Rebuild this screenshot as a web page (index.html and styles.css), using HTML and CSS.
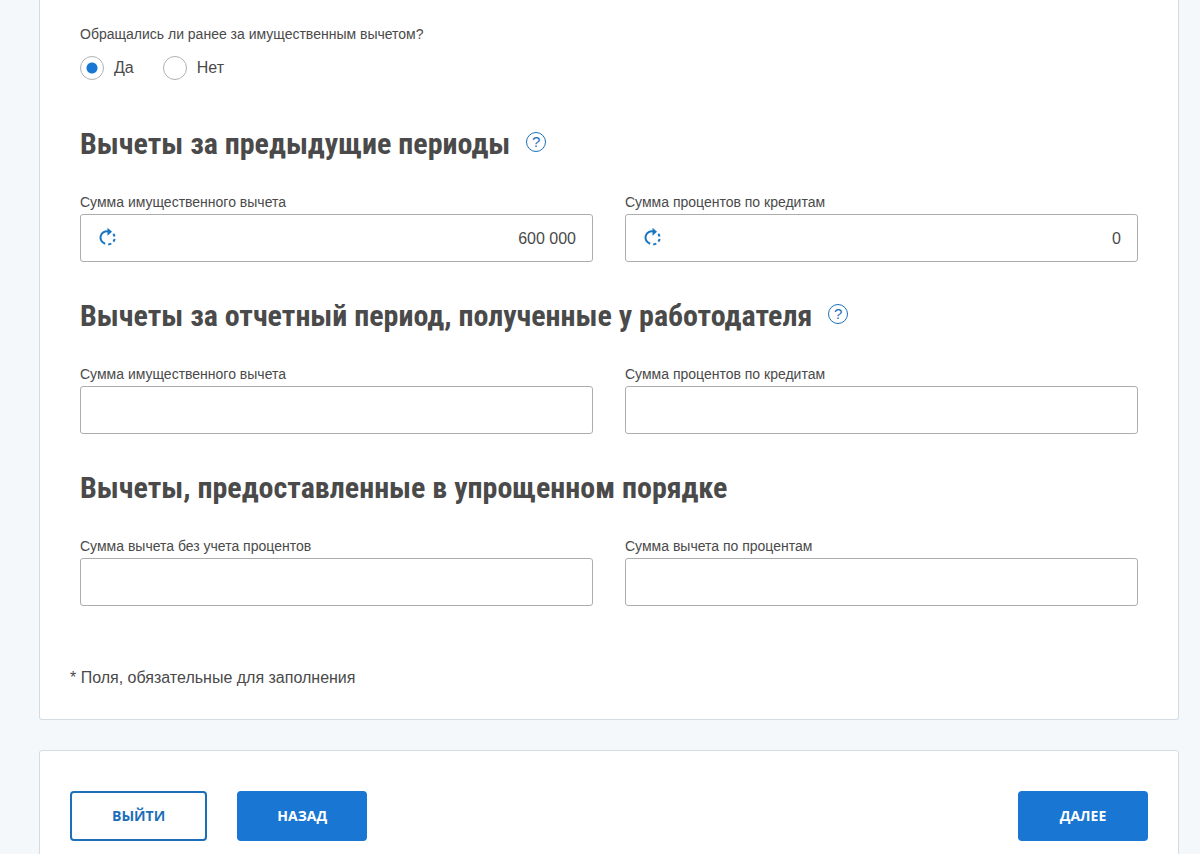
FILE: index.html
```html
<!DOCTYPE html>
<html lang="ru">
<head>
<meta charset="utf-8">
<meta name="viewport" content="width=device-width, initial-scale=1">
<title>Имущественный вычет</title>
<link rel="stylesheet" href="styles.css">
</head>
<body>
<svg class="sprite" aria-hidden="true">
  <symbol id="refresh" viewBox="0 0 18 20">
    <path d="M9.500 4.600A6.200 6.200 0 0 0 6.200 16.800" fill="none" stroke="currentColor" stroke-width="2"/>
    <path d="M8.500 .8 13 4.800 8.500 8.800Z" fill="currentColor"/>
    <path d="M14.300 6.900A6.600 6.600 0 0 1 15.500 9.400M15.600 11.800A6.600 6.600 0 0 1 14.400 14.600M12.300 16.500A6.600 6.600 0 0 1 9.200 17.500" fill="none" stroke="currentColor" stroke-width="2"/>
  </symbol>
</svg>
<main class="page">
  <form class="form" id="deduction">
    <section class="card card-form">
      <div class="content">
        <fieldset class="question">
          <legend class="label">Обращались ли ранее за имущественным вычетом?</legend>
          <div class="options">
            <label class="option"><input class="radio" type="radio" name="applied" checked>Да</label>
            <label class="option"><input class="radio" type="radio" name="applied">Нет</label>
          </div>
        </fieldset>

        <div class="heading">
          <h2 class="title">Вычеты за предыдущие периоды</h2>
          <button class="help" type="button" aria-label="Подсказка">?</button>
        </div>
        <div class="fields">
          <div class="field">
            <label class="label" for="prev-sum">Сумма имущественного вычета</label>
            <div class="control">
              <input class="input" id="prev-sum" type="text" value="600 000">
              <button class="refresh" type="button" aria-label="Обновить"><svg class="refresh-icon"><use href="#refresh"/></svg></button>
            </div>
          </div>
          <div class="field">
            <label class="label" for="prev-interest">Сумма процентов по кредитам</label>
            <div class="control">
              <input class="input" id="prev-interest" type="text" value="0">
              <button class="refresh" type="button" aria-label="Обновить"><svg class="refresh-icon"><use href="#refresh"/></svg></button>
            </div>
          </div>
        </div>

        <div class="heading">
          <h2 class="title">Вычеты за отчетный период, полученные у работодателя</h2>
          <button class="help" type="button" aria-label="Подсказка">?</button>
        </div>
        <div class="fields">
          <div class="field">
            <label class="label" for="employer-sum">Сумма имущественного вычета</label>
            <input class="input" id="employer-sum" type="text">
          </div>
          <div class="field">
            <label class="label" for="employer-interest">Сумма процентов по кредитам</label>
            <input class="input" id="employer-interest" type="text">
          </div>
        </div>

        <div class="heading">
          <h2 class="title">Вычеты, предоставленные в упрощенном порядке</h2>
        </div>
        <div class="fields">
          <div class="field">
            <label class="label" for="simple-sum">Сумма вычета без учета процентов</label>
            <input class="input" id="simple-sum" type="text">
          </div>
          <div class="field">
            <label class="label" for="simple-interest">Сумма вычета по процентам</label>
            <input class="input" id="simple-interest" type="text">
          </div>
        </div>
      </div>
      <p class="note">* Поля, обязательные для заполнения</p>
    </section>

    <section class="card card-actions">
      <button class="button button-outline" type="button">ВЫЙТИ</button>
      <button class="button" type="button">НАЗАД</button>
      <button class="button button-next" type="submit">ДАЛЕЕ</button>
    </section>
  </form>
</main>
</body>
</html>
```
FILE: styles.css
```css
* {
  box-sizing: border-box;
}

body {
  margin: 0;
  background: #f4f8fb;
  color: #4a4a4a;
  font: 16px/20px "Liberation Sans", Arial, sans-serif;
}

button,
input {
  font: inherit;
  color: inherit;
}

.sprite {
  position: absolute;
  width: 0;
  height: 0;
}

.page {
  padding: 0 21px 0 39px;
}

.form {
  display: flex;
  flex-direction: column;
  gap: 30px;
}

.card {
  background: #fff;
  border: 1px solid #d3dce4;
  border-radius: 3px;
}

.card-form {
  padding: 26px 30px 31px;
  border-top: 0;
  border-radius: 0 0 3px 3px;
}

.content {
  padding: 0 10px;
}

.question {
  margin: 0 0 44px;
  padding: 0;
  border: 0;
}

.label {
  display: block;
  padding: 0;
  font-size: 14px;
  line-height: 16px;
}

.options {
  display: flex;
  gap: 29px;
  margin-top: 14px;
}

.option {
  display: flex;
  align-items: center;
  gap: 10px;
}

.radio {
  appearance: none;
  width: 24px;
  height: 24px;
  margin: 0;
  border: 1px solid #adb1b5;
  border-radius: 50%;
}

.radio:checked {
  background: radial-gradient(circle, #1976d2 0 5px, transparent 6px);
}

.heading {
  display: flex;
  gap: 16px;
  margin-bottom: 30px;
}

.title {
  margin: 0;
  font: bold 30px/40px "Roboto Condensed", "Liberation Sans Narrow", "Arial Narrow", sans-serif;
}

.help {
  width: 20px;
  height: 20px;
  margin-top: 8px;
  padding: 0;
  border: 1px solid #1c6fb8;
  border-radius: 50%;
  background: none;
  color: #1c6fb8;
  font: 15px/18px "Liberation Sans", Arial, sans-serif;
}

.fields {
  display: grid;
  grid-template-columns: 1fr 1fr;
  gap: 32px;
  margin-bottom: 34px;
}

.field {
  display: flex;
  flex-direction: column;
  gap: 4px;
}

.control {
  position: relative;
}

.input {
  display: block;
  width: 100%;
  height: 48px;
  padding: 1px 16px 0;
  border: 1px solid #adadad;
  border-radius: 3px;
  background: #fff;
  text-align: right;
}

.refresh {
  position: absolute;
  top: 13px;
  left: 19px;
  padding: 0;
  border: 0;
  background: none;
  color: #1976c2;
}

.refresh-icon {
  display: block;
  width: 18px;
  height: 20px;
}

.note {
  margin: 62px 0 0;
}

.card-actions {
  display: flex;
  gap: 30px;
  padding: 40px 30px;
}

.button {
  min-width: 130px;
  height: 50px;
  padding: 0 40px;
  border: 0;
  border-radius: 4px;
  background: #1976d2;
  color: #fff;
  font: bold 14px/20px "Open Sans", sans-serif;
}

.button-outline {
  border: 2px solid #1c6fb8;
  background: #fff;
  color: #1c6fb8;
}

.button-next {
  margin-left: auto;
}
```
